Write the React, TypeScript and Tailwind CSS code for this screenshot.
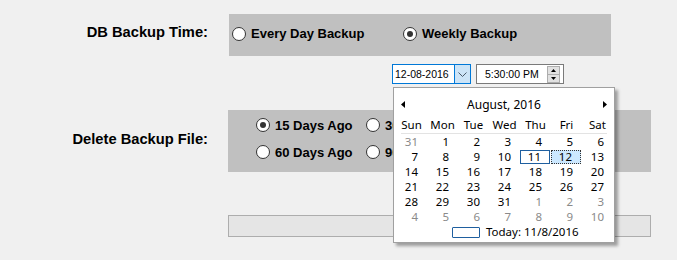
const days = ['Sun', 'Mon', 'Tue', 'Wed', 'Thu', 'Fri', 'Sat']

const cells: { n: number; muted?: boolean }[] = [
  { n: 31, muted: true },
  ...Array.from({ length: 31 }, (_, i) => ({ n: i + 1 })),
  ...Array.from({ length: 10 }, (_, i) => ({ n: i + 1, muted: true })),
]

function Radio({ label, checked }: { label: string; checked?: boolean }) {
  return (
    <div className="flex items-center gap-[5px]">
      <span className="flex h-[14px] w-[14px] items-center justify-center rounded-full border border-[#333] bg-white">
        {checked && <span className="h-[6px] w-[6px] rounded-full bg-[#333]" />}
      </span>
      <span className="text-[13px] font-bold leading-none text-black">{label}</span>
    </div>
  )
}

function Calendar() {
  return (
    <div className="absolute left-0 top-[22px] z-10 h-[156px] w-[222px] border border-[#a0a0a0] bg-white shadow-[3px_3px_3px_rgba(0,0,0,0.35)] font-['Noto_Sans',sans-serif] text-[11.5px] leading-none">
      {/* month header */}
      <div className="mt-[9px] flex h-[15px] items-center justify-between px-[7px]">
        <svg width="4" height="7" viewBox="0 0 4 7">
          <polygon points="4,0 0,3.5 4,7" fill="#000" />
        </svg>
        <span className="text-[12px] text-black">August, 2016</span>
        <svg width="4" height="7" viewBox="0 0 4 7">
          <polygon points="0,0 4,3.5 0,7" fill="#000" />
        </svg>
      </div>

      {/* day names */}
      <div className="mt-[5px] grid h-[16px] grid-cols-[repeat(7,31px)] items-center px-[2px]">
        {days.map((d) => (
          <span key={d} className="text-center text-black">{d}</span>
        ))}
      </div>
      <div className="mx-[7px] h-px bg-[#e3e3e3]" />

      {/* dates */}
      <div className="grid grid-cols-[repeat(7,31px)] px-[2px]">
        {cells.map((c, i) => {
          const isToday = !c.muted && c.n === 11
          const isSel = !c.muted && c.n === 12
          return (
            <div key={i} className="flex h-[15px] items-center">
              <span
                className={
                  'flex h-[14px] w-[30px] items-center justify-end pr-[8px] ' +
                  (c.muted ? 'text-[#8a8a8a] ' : 'text-black ') +
                  (isToday ? 'border border-[#1f5f9f] ' : '') +
                  (isSel ? 'border border-dotted border-[#333] bg-[#cce8ff] ' : '')
                }
              >
                {c.n}
              </span>
            </div>
          )
        })}
      </div>

      {/* today */}
      <div className="mt-[1px] flex h-[14px] items-center pl-[58px]">
        <span className="h-[11px] w-[28px] rounded-[1px] border border-[#1f5f9f]" />
        <span className="ml-[6px] text-black">Today: 11/8/2016</span>
      </div>
    </div>
  )
}

export default function App() {
  return (
    <div className="relative h-[260px] w-[677px] overflow-hidden bg-[#f0f0f0] font-['Liberation_Sans',Arial,sans-serif]">
      <div className="pt-[14px]">
        {/* DB backup time */}
        <div className="flex h-[42px]">
          <div className="w-[208px] self-center pb-[6px] text-right text-[14.7px] font-bold leading-none text-black">
            DB Backup Time:
          </div>
          <div className="ml-[21px] flex h-[42px] w-[382px] items-center bg-[#c0c0c0] pb-[3px] pl-[3px]">
            <div className="w-[171px]">
              <Radio label="Every Day Backup" />
            </div>
            <Radio label="Weekly Backup" checked />
          </div>
        </div>

        {/* date + time pickers */}
        <div className="relative z-10 mt-[8px] ml-[392px] flex h-[20px] gap-[5px]">
          <div className="relative flex h-[20px] w-[79px] border border-[#0078d7] bg-white">
            <span className="flex-1 pl-[2px] text-[10.5px] leading-[18px] text-black">12-08-2016</span>
            <span className="flex w-[16px] items-center justify-center border-l border-[#0078d7] bg-[#cce4f7]">
              <svg width="9" height="5" viewBox="0 0 9 5">
                <polyline points="0.5,0.5 4.5,4.5 8.5,0.5" fill="none" stroke="#4a5a6a" strokeWidth="1" />
              </svg>
            </span>
            <Calendar />
          </div>
          <div className="flex h-[20px] w-[88px] items-center border border-[#7a7a7a] bg-white">
            <span className="flex-1 pl-[8px] text-[10.5px] leading-none text-black">5:30:00 PM</span>
            <span className="mr-[3px] flex h-[17px] w-[13px] flex-col border border-[#adadad] bg-[#e1e1e1]">
              <span className="flex flex-1 items-center justify-center border-b border-[#adadad]">
                <svg width="5" height="3" viewBox="0 0 5 3">
                  <polygon points="0,3 2.5,0 5,3" fill="#000" />
                </svg>
              </span>
              <span className="flex flex-1 items-center justify-center">
                <svg width="5" height="3" viewBox="0 0 5 3">
                  <polygon points="0,0 2.5,3 5,0" fill="#000" />
                </svg>
              </span>
            </span>
          </div>
        </div>

        {/* delete backup file */}
        <div className="mt-[26px] flex h-[62px]">
          <div className="w-[208px] self-center pb-[3px] text-right text-[14.7px] font-bold leading-none text-black">
            Delete Backup File:
          </div>
          <div className="ml-[20px] grid h-[62px] w-[423px] grid-cols-[110px_110px_1fr] content-start gap-y-[13px] bg-[#c0c0c0] pl-[28px] pt-[8px]">
            <Radio label="15 Days Ago" checked />
            <Radio label="30 Days Ago" />
            <span />
            <Radio label="60 Days Ago" />
            <Radio label="90 Days Ago" />
            <span />
          </div>
        </div>

        {/* bottom bar */}
        <div className="mt-[43px] ml-[228px] h-[22px] w-[423px] border border-[#adadad] bg-[#e5e5e5]" />
      </div>
    </div>
  )
}
